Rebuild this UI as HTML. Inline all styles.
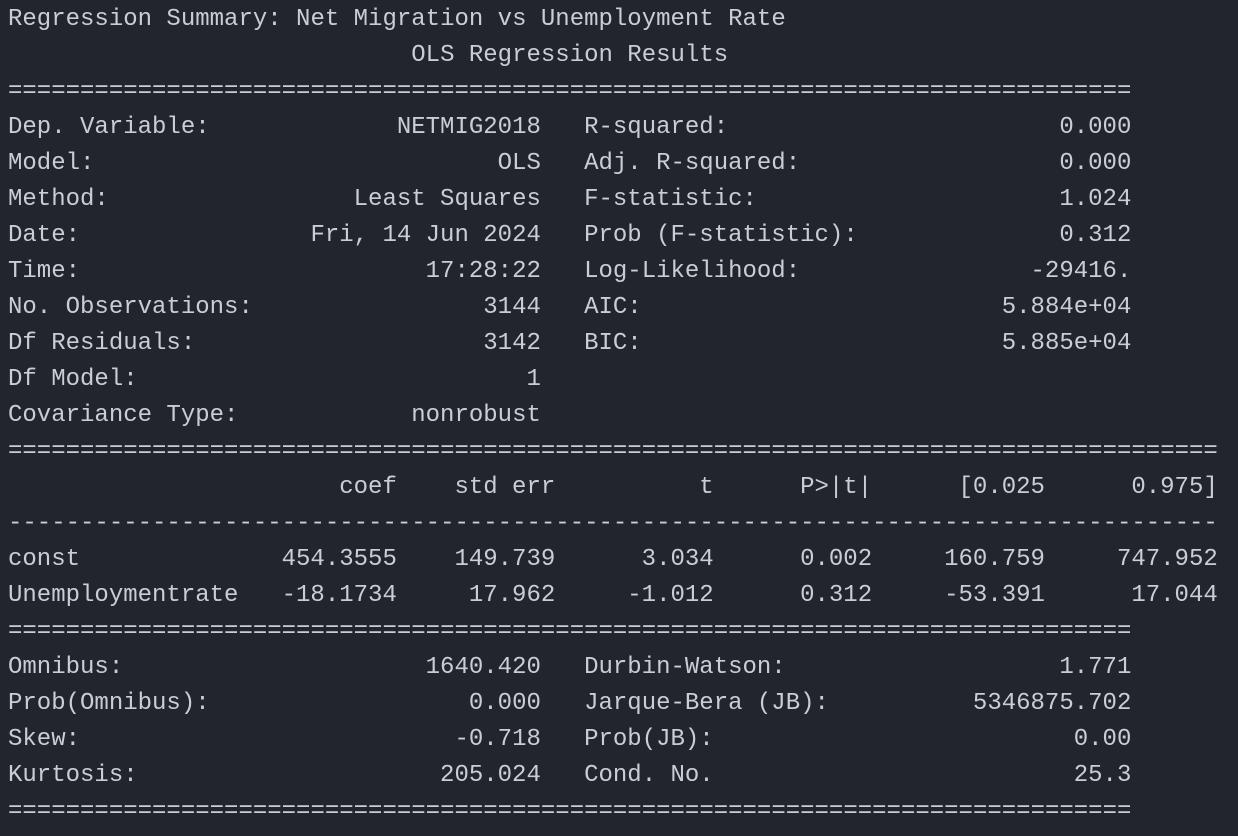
<!DOCTYPE html>
<html><head><meta charset="utf-8">
<style>
html,body{margin:0;padding:0;background:#22252d;}
body{width:1238px;height:836px;overflow:hidden;}
.w{padding-left:8px;padding-top:2px;font-family:"Liberation Mono",monospace;font-size:24px;line-height:36px;color:#c9cdd4;}
.row{height:36px;display:flex;white-space:pre;}
.c{display:inline-flex;justify-content:space-between;}
.g{display:inline-block;width:3ch;}
.r{display:inline-block;text-align:right;}
</style></head><body><div class="w"><div class="row">Regression Summary: Net Migration vs Unemployment Rate</div><div class="row">                            OLS Regression Results</div><div class="row">==============================================================================</div><div class="row"><span class="c" style="width:37ch"><span>Dep. Variable:</span><span>NETMIG2018</span></span><span class="g"></span><span class="c" style="width:38ch"><span>R-squared:</span><span>0.000</span></span></div><div class="row"><span class="c" style="width:37ch"><span>Model:</span><span>OLS</span></span><span class="g"></span><span class="c" style="width:38ch"><span>Adj. R-squared:</span><span>0.000</span></span></div><div class="row"><span class="c" style="width:37ch"><span>Method:</span><span>Least Squares</span></span><span class="g"></span><span class="c" style="width:38ch"><span>F-statistic:</span><span>1.024</span></span></div><div class="row"><span class="c" style="width:37ch"><span>Date:</span><span>Fri, 14 Jun 2024</span></span><span class="g"></span><span class="c" style="width:38ch"><span>Prob (F-statistic):</span><span>0.312</span></span></div><div class="row"><span class="c" style="width:37ch"><span>Time:</span><span>17:28:22</span></span><span class="g"></span><span class="c" style="width:38ch"><span>Log-Likelihood:</span><span>-29416.</span></span></div><div class="row"><span class="c" style="width:37ch"><span>No. Observations:</span><span>3144</span></span><span class="g"></span><span class="c" style="width:38ch"><span>AIC:</span><span>5.884e+04</span></span></div><div class="row"><span class="c" style="width:37ch"><span>Df Residuals:</span><span>3142</span></span><span class="g"></span><span class="c" style="width:38ch"><span>BIC:</span><span>5.885e+04</span></span></div><div class="row"><span class="c" style="width:37ch"><span>Df Model:</span><span>1</span></span></div><div class="row"><span class="c" style="width:37ch"><span>Covariance Type:</span><span>nonrobust</span></span></div><div class="row">====================================================================================</div><div class="row"><span class="r" style="width:17ch"></span><span class="r" style="width:10ch">coef</span><span class="r" style="width:11ch">std err</span><span class="r" style="width:11ch">t</span><span class="r" style="width:11ch">P&gt;|t|</span><span class="r" style="width:12ch">[0.025</span><span class="r" style="width:12ch">0.975]</span></div><div class="row">------------------------------------------------------------------------------------</div><div class="row"><span style="display:inline-block;width:17ch">const</span><span class="r" style="width:10ch">454.3555</span><span class="r" style="width:11ch">149.739</span><span class="r" style="width:11ch">3.034</span><span class="r" style="width:11ch">0.002</span><span class="r" style="width:12ch">160.759</span><span class="r" style="width:12ch">747.952</span></div><div class="row"><span style="display:inline-block;width:17ch">Unemploymentrate</span><span class="r" style="width:10ch">-18.1734</span><span class="r" style="width:11ch">17.962</span><span class="r" style="width:11ch">-1.012</span><span class="r" style="width:11ch">0.312</span><span class="r" style="width:12ch">-53.391</span><span class="r" style="width:12ch">17.044</span></div><div class="row">==============================================================================</div><div class="row"><span class="c" style="width:37ch"><span>Omnibus:</span><span>1640.420</span></span><span class="g"></span><span class="c" style="width:38ch"><span>Durbin-Watson:</span><span>1.771</span></span></div><div class="row"><span class="c" style="width:37ch"><span>Prob(Omnibus):</span><span>0.000</span></span><span class="g"></span><span class="c" style="width:38ch"><span>Jarque-Bera (JB):</span><span>5346875.702</span></span></div><div class="row"><span class="c" style="width:37ch"><span>Skew:</span><span>-0.718</span></span><span class="g"></span><span class="c" style="width:38ch"><span>Prob(JB):</span><span>0.00</span></span></div><div class="row"><span class="c" style="width:37ch"><span>Kurtosis:</span><span>205.024</span></span><span class="g"></span><span class="c" style="width:38ch"><span>Cond. No.</span><span>25.3</span></span></div><div class="row">==============================================================================</div></div></body></html>
